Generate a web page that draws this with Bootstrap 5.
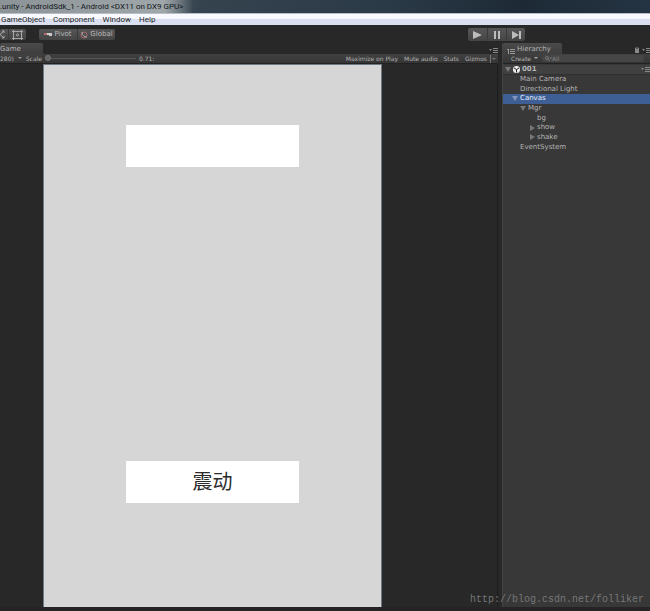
<!DOCTYPE html>
<html lang="en">
<head>
<meta charset="utf-8">
<meta name="viewport" content="width=device-width, initial-scale=1">
<title>Unity editor</title>
<link rel="stylesheet" href="https://cdn.jsdelivr.net/npm/bootstrap@5.3.0/dist/css/bootstrap.min.css">
<style>
body{background:#282828;color:#b4b4b4;font:7px/9px "DejaVu Sans",sans-serif;white-space:nowrap}
button,input{font:inherit;color:inherit;border:0;background:none;padding:0}
svg{display:block;flex:none}
.titlebar{height:13px;background:linear-gradient(100deg,#6d777d 0,#59646b 20%,#35434f 31%,#2b3a47 60%,#1d2a36 80%,#253443);color:#10161a;font:8px/13px Roboto,sans-serif}
.titlebar h1{font:inherit;margin:0;padding-right:10px;background:linear-gradient(90deg,#8b9397,#a0a7aa 85%,#a0a7aa00)}
.menus{height:12px;background:linear-gradient(#f8faff 0 40%,#d9dff0 50%,#dbe1f1);border-top:1px solid #b6bfc9;font:8px/11px Roboto,sans-serif;color:#222;padding-left:1px;gap:8px}
.tools{height:18px;padding-top:4px}
.pill{height:11px;background:linear-gradient(#565656,#444);border-radius:2px;color:#b8b8b8}
.pill button{height:11px;display:flex;align-items:center;justify-content:center}
.pill button+button{border-left:1px solid #3a3a3a}
.edit-tools{width:26px}
.edit-tools .cut{width:8px}
.pivot-set{margin-left:13px}
.pivot-set button{width:38px;gap:2px}
.play-set{margin-left:353px}
.tools .play-set{margin-top:-1px;height:13px}
.play-set button{width:19px;height:13px}
.side{width:148px;background:#383838;border-left:1px solid #444}
.game{margin-right:4px}
.tabs{height:11px;background:#282828}
.tab-on{height:11px;background:linear-gradient(#4a4a4a,#3e3e3e);border-radius:2px 2px 0 0;padding-top:2px}
.game .tab-on{width:43px}
.side .tab-on{width:59px;gap:2px;padding-left:4px}
.bar{height:10px;background:linear-gradient(#414141,#353535);border-bottom:1px solid #222;font-size:6px}
.bar button{line-height:9px}
.bar-end{gap:6px;padding-right:2px}
.caret{gap:3px}
.zoom{appearance:none;width:91px;height:6px;margin:0 3px}
.zoom::-webkit-slider-runnable-track{height:1px;background:#565656}
.zoom::-webkit-slider-thumb{appearance:none;width:6px;height:6px;border-radius:50%;background:#626262;border:1px solid #777;margin-top:-3px}
.stage{padding:1px 116px 0 44px;border-right:1px solid #1d1d1d}
.screen{background:#d6d6d6;padding:60px 82px 104px;box-shadow:0 0 0 1px #6f7984}
.screen button{height:42px;background:#fff;color:#2b2b2b;font:20px/40px "Noto Sans CJK SC",sans-serif;width:100%;padding-bottom:2px}
.foot{height:4px;background:#252324}
.search{width:102px;height:7px;border-radius:4px;background:#464646;padding-left:3px}
.search input{width:60px;height:7px;line-height:7px;font-size:6px}
.search input::placeholder{color:#828282;opacity:1}
.tree{height:87px;display:grid;grid-auto-rows:1fr;margin:1px 0 0;padding:0;list-style:none}
.tree li{display:flex;align-items:center;padding-left:10px;gap:2px;min-height:0}
.tree .scene{background:#404040;padding-left:2px;font-weight:700;box-shadow:inset 0 -1px #303030}
.tree .d1{padding-left:17px}
.tree .d3{padding-left:34px}
.tree .open1{padding-left:9px}
.tree .open2{padding-left:17px}
.tree .open3{padding-left:26px}
.tree .picked{background:#3e5f96;color:#e8eef8}
.credit{position:absolute;right:6px;bottom:4px;color:#777;font:10px/14px "Liberation Mono",monospace}
</style>
<script src="https://cdn.jsdelivr.net/npm/bootstrap@5.3.0/dist/js/bootstrap.bundle.min.js"></script>
</head>
<body class="vh-100 d-flex flex-column overflow-hidden position-relative">
<header>
  <div class="titlebar d-flex"><h1>.unity - AndroidSdk_1 - Android &lt;DX11 on DX9 GPU&gt;</h1></div>
  <nav class="menus d-flex"><button>GameObject</button><button>Component</button><button>Window</button><button>Help</button></nav>
  <div class="tools d-flex">
    <div class="pill edit-tools d-flex">
      <button class="cut justify-content-start" aria-label="Scale tool"><svg width="5" height="9" viewBox="0 0 5 9" stroke="#aaa" fill="none"><path d="M0 4.500 4 1M0 4.500 4 8M2 1h2v2M2 8h2V6"/></svg></button>
      <button class="flex-grow-1" aria-label="Rect tool"><svg width="11" height="10" viewBox="0 0 11 10" stroke="#aaa" fill="none"><path d="M1.500 0v10M9.500 0v10M0 1.500h11M0 8.500h11"/><circle cx="5.500" cy="5" r="1" /></svg></button>
    </div>
    <div class="pill pivot-set d-flex">
      <button><svg width="8" height="6" viewBox="0 0 8 6"><path d="M0 1h4v2H0z" fill="#b56b72"/><path d="M3 1h5v3H5V3H3z" fill="#ccc"/></svg>Pivot</button>
      <button><svg width="8" height="8" viewBox="0 0 8 8" fill="none"><circle cx="4" cy="4" r="3" stroke="#a66b70"/><path d="M2 1c0 3 2 5 5 5" stroke="#aaa"/></svg>Global</button>
    </div>
    <div class="pill play-set d-flex">
      <button aria-label="Play"><svg width="9" height="8" fill="#bcbcbc"><path d="M0 0 9 4 0 8z"/></svg></button>
      <button aria-label="Pause"><svg width="6" height="8" fill="#bcbcbc"><path d="M0 0h2v8H0zM4 0h2v8H4z"/></svg></button>
      <button aria-label="Step"><svg width="9" height="8" fill="#bcbcbc"><path d="M0 0 7 4 0 8zM7 0h2v8H7z"/></svg></button>
    </div>
  </div>
</header>
<main class="d-flex flex-grow-1">
  <section class="game flex-grow-1 d-flex flex-column">
    <div class="tabs d-flex justify-content-between"><div class="tab-on">Game</div><svg class="mt-auto" width="9" height="6" fill="#888"><path d="M0 1h3L1.500 3zM4 0h5v1H4zM4 2h5v1H4zM4 4h5v1H4z"/></svg></div>
    <div class="bar d-flex align-items-center">
      <button>280)</button><svg class="ms-1" width="4" height="3" fill="#999"><path d="M0 0h4L2 2z"/></svg>
      <label for="zoom" class="ms-1">Scale</label><input id="zoom" class="zoom" type="range" min="0" max="100" value="0"><span>0.71:</span>
      <div class="bar-end d-flex ms-auto align-items-center"><button>Maximize on Play</button><button>Mute audio</button><button>Stats</button><button class="caret d-flex align-items-center">Gizmos<svg width="6" height="8" fill="#777"><path d="M0 0h1v8H0zM2 3h4L4 5z"/></svg></button></div>
    </div>
    <div class="stage flex-grow-1 d-flex">
      <div class="screen flex-grow-1 d-flex flex-column justify-content-between"><button aria-label="Show"></button><button>震动</button></div>
    </div>
  </section>
  <aside class="side">
    <div class="tabs d-flex"><div class="tab-on d-flex"><svg class="mt-1" width="8" height="6" fill="#999"><path d="M0 0h2v1H0zM1 1h1v4H1zM3 0h5v1H3zM3 2h5v1H3zM3 4h5v1H3z"/></svg>Hierarchy</div>
      <svg class="ms-auto mt-1" width="16" height="6"><path d="M1 2h4v4H1z" fill="#888"/><path d="M1.500 3V1h3v2" stroke="#888" fill="none"/><path d="M8 2h3L9.500 4zM12 1h4v1h-4zM12 3h4v1h-4zM12 5h4v1h-4z" fill="#888"/></svg></div>
    <div class="bar d-flex align-items-center"><button class="caret d-flex align-items-center ms-1 ps-1">Create<svg width="4" height="3" fill="#aaa"><path d="M0 0h4L2 2z"/></svg></button>
      <label class="search d-flex align-items-center ms-1"><svg width="7" height="5" fill="none" stroke="#777"><circle cx="2" cy="2" r="1.500"/><path d="m3 3 2 2M5 2h2"/></svg><input type="text" placeholder="All" aria-label="Search hierarchy"></label></div>
    <ul class="tree">
      <li class="scene"><svg width="6" height="5" fill="#777"><path d="M0 0h6L3 5z"/></svg><svg width="7" height="7" viewBox="0 0 7 7"><circle cx="3.500" cy="3.500" r="3.500" fill="#eee"/><path d="M3.500 3.500 6 2M3.500 3.500v3M3.500 3.500 1 2" stroke="#222"/></svg>001<svg class="ms-auto" width="9" height="5" fill="#888"><path d="M0 1h3L1.500 3zM4 0h5v1H4zM4 2h5v1H4zM4 4h5v1H4z"/></svg></li>
      <li class="d1">Main Camera</li>
      <li class="d1">Directional Light</li>
      <li class="picked open1"><svg width="6" height="5" fill="#8095b8"><path d="M0 0h6L3 5z"/></svg>Canvas</li>
      <li class="open2"><svg width="6" height="5" fill="#777"><path d="M0 0h6L3 5z"/></svg>Mgr</li>
      <li class="d3">bg</li>
      <li class="open3"><svg width="6" height="6" fill="#777"><path d="M1 0v6l5-3z"/></svg>show</li>
      <li class="open3"><svg width="6" height="6" fill="#777"><path d="M1 0v6l5-3z"/></svg>shake</li>
      <li class="d1">EventSystem</li>
    </ul>
  </aside>
</main>
<footer class="foot"></footer>
<a class="credit text-decoration-none" href="http://blog.csdn.net/folliker">http://blog.csdn.net/folliker</a>
</body>
</html>
